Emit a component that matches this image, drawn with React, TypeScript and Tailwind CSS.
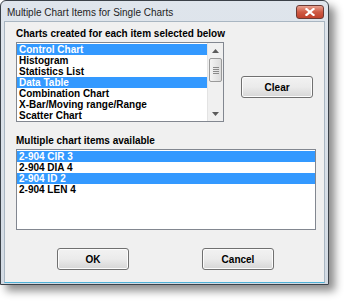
const charts = [
  { label: "Control Chart", selected: true },
  { label: "Histogram", selected: false },
  { label: "Statistics List", selected: false },
  { label: "Data Table", selected: true },
  { label: "Combination Chart", selected: false },
  { label: "X-Bar/Moving range/Range", selected: false },
  { label: "Scatter Chart", selected: false },
];

const items = [
  { label: "2-904 CIR 3", selected: true },
  { label: "2-904 DIA 4", selected: false },
  { label: "2-904 ID 2", selected: true },
  { label: "2-904 LEN 4", selected: false },
];

function WinButton({ children, className }: { children: React.ReactNode; className?: string }) {
  return (
    <button
      className={
        "flex h-[22px] w-[72px] items-center justify-center rounded-[3px] border border-[#707070] bg-gradient-to-b from-[#f2f2f2] via-[#ebebeb] to-[#d6d6d6] text-[10px] font-bold text-black shadow-[inset_0_0_0_1px_#fcfcfc] " +
        (className ?? "")
      }
    >
      {children}
    </button>
  );
}

function Row({ label, selected }: { label: string; selected: boolean }) {
  return (
    <div
      className={
        "h-[11px] pl-[2px] leading-[11px] whitespace-nowrap " +
        (selected ? "bg-[#3399ff] text-white" : "text-black")
      }
    >
      {label}
    </div>
  );
}

export default function App() {
  return (
    <div className="h-[301px] w-[344px] overflow-hidden bg-white font-['Liberation_Sans',Arial,sans-serif]">
      <div className="flex h-[285px] w-[329px] flex-col rounded-t-[6px] border border-[#3b4148] bg-gradient-to-b from-[#dfe5ec] to-[#d3dbe4] shadow-[6px_6px_8px_rgba(0,0,0,0.45)]">
        {/* title bar */}
        <div className="flex h-[20px] shrink-0 items-center justify-between pl-[6px] pr-[4px]">
          <span className="mt-[3px] text-[10px] text-[#1e1e1e]">Multiple Chart Items for Single Charts</span>
          <div className="mt-[2px] flex h-[14px] w-[28px] items-center justify-center rounded-[3px] border border-[#6b3a34] bg-gradient-to-b from-[#e8a190] via-[#cf5a44] to-[#c0412c]">
            <svg width="10" height="8" viewBox="0 0 10 8">
              <path d="M1.5 1 L8.5 7 M8.5 1 L1.5 7" stroke="white" strokeWidth="2.2" strokeLinecap="square" />
            </svg>
          </div>
        </div>
        {/* client */}
        <div className="mx-[3px] mb-[1px] flex flex-1 flex-col border border-[#a9b6c2] border-b-[#4fb1d6] bg-[#f0f0f0] px-[11px] pt-[6px]">
          <div className="text-[10px] font-bold leading-[12px] text-black">
            Charts created for each item selected below
          </div>
          <div className="mt-[2px] flex items-start">
            <div className="flex h-[80px] w-[209px] border border-[#828790] bg-white">
              <div className="flex-1 overflow-hidden pt-[1px] text-[10px] font-bold">
                {charts.map((c) => (
                  <Row key={c.label} {...c} />
                ))}
              </div>
              <div className="flex w-[16px] flex-col items-center border-l border-[#e3e3e3] bg-[#f0f0f0]">
                <div className="flex h-[15px] w-full items-center justify-center">
                  <svg width="7" height="4" viewBox="0 0 7 4">
                    <path d="M0 4 L3.5 0 L7 4 Z" fill="#5b5b5b" />
                  </svg>
                </div>
                <div className="flex h-[24px] w-[13px] flex-col items-center justify-center gap-[1px] rounded-[2px] border border-[#9a9a9a] bg-gradient-to-r from-[#f4f4f4] to-[#dcdcdc]">
                  <div className="h-px w-[6px] bg-[#8a8a8a]" />
                  <div className="h-px w-[6px] bg-[#8a8a8a]" />
                  <div className="h-px w-[6px] bg-[#8a8a8a]" />
                  <div className="h-px w-[6px] bg-[#8a8a8a]" />
                </div>
                <div className="flex-1" />
                <div className="flex h-[15px] w-full items-center justify-center">
                  <svg width="7" height="4" viewBox="0 0 7 4">
                    <path d="M0 0 L3.5 4 L7 0 Z" fill="#5b5b5b" />
                  </svg>
                </div>
              </div>
            </div>
            <WinButton className="ml-[17px] mt-[34px]">Clear</WinButton>
          </div>
          <div className="mt-[13px] text-[10px] font-bold leading-[12px] text-black">
            Multiple chart items available
          </div>
          <div className="mt-[2px] h-[81px] w-[300px] border border-[#828790] bg-white pt-[1px] text-[10px] font-bold">
            {items.map((c) => (
              <Row key={c.label} {...c} />
            ))}
          </div>
          <div className="mt-[18px] flex pl-[41px]">
            <WinButton>OK</WinButton>
            <WinButton className="ml-[73px]">Cancel</WinButton>
          </div>
        </div>
      </div>
    </div>
  );
}
